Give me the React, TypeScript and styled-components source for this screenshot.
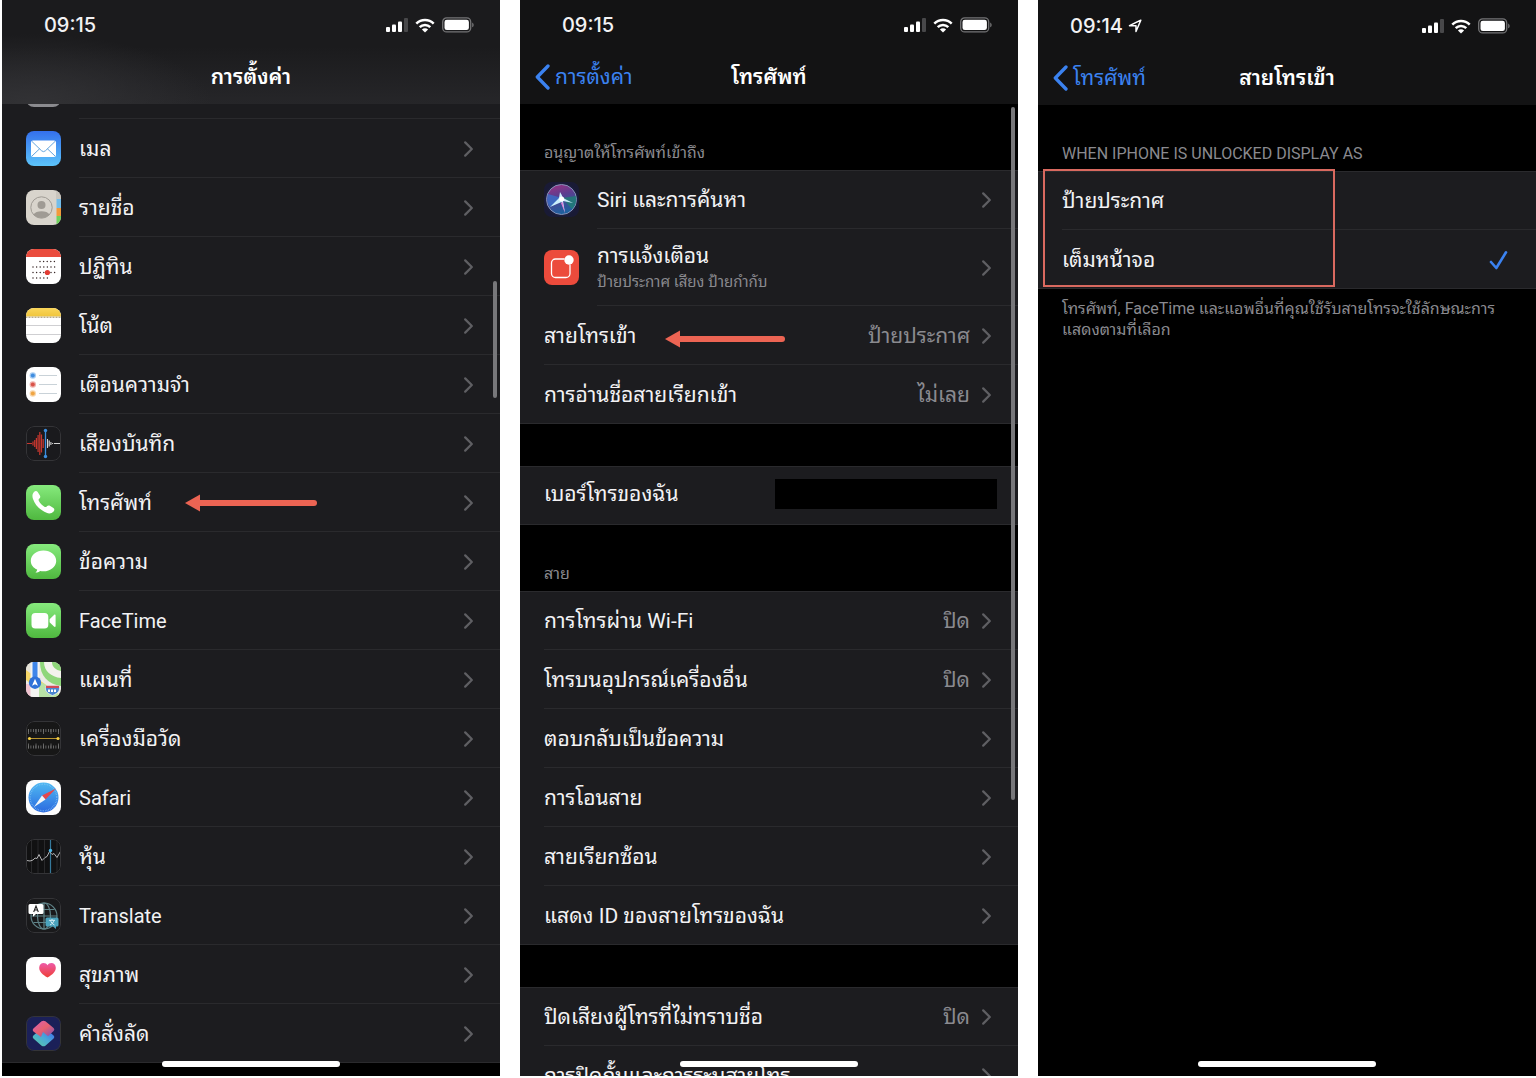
import React from "react";
import styled, { createGlobalStyle } from "styled-components";

const GlobalStyle = createGlobalStyle`
  * { box-sizing: border-box; }
  html, body { margin: 0; background: #fff; }
  body { font-family: Roboto, "Noto Sans Thai Looped", Loma, Garuda, Waree, "Noto Sans Thai", "Noto Sans", sans-serif; }
`;

const colors = {
  row: "#1c1c1f",
  line: "#2a2a2d",
  text: "#f2f2f4",
  muted: "#8a8a8f",
  chevron: "#5f5f63",
  blue: "#3b82f0",
  coral: "#ec6453",
};

/* ---------- layout ---------- */

const Board = styled.main`
  display: grid;
  grid-template-columns: repeat(3, minmax(0, 1fr));
  gap: 20px;
  height: 100vh;
  padding: 0 0 2px 2px;
  overflow: hidden;
`;

const Phone = styled.section`
  position: relative;
  display: flex;
  flex-direction: column;
  min-height: 0;
  overflow: hidden;
  background: #000;
  color: ${colors.text};
`;

const Header = styled.header<{ $lit?: boolean; $inset?: boolean }>`
  flex: none;
  padding-top: ${(p) => (p.$inset ? "1px" : "0")};
  background: ${(p) =>
    p.$lit
      ? "radial-gradient(ellipse 180px 70px at 30px 104px, #323235, transparent), linear-gradient(#1b1b1d 45%, #262629)"
      : "#131314"};
`;

const StatusBar = styled.div`
  display: flex;
  align-items: center;
  justify-content: space-between;
  height: 50px;
  padding-right: 26px;
`;

const Clock = styled.div`
  display: flex;
  align-items: center;
  justify-content: center;
  gap: 5px;
  width: 136px;
  font-family: Inter, sans-serif;
  font-size: 20px;
  font-weight: 500;
  line-height: 24px;
`;

const StatusIcons = styled.div`
  display: flex;
  align-items: center;
  gap: 7px;
`;

const NavBar = styled.nav`
  display: grid;
  grid-template-columns: 1fr auto 1fr;
  align-items: center;
  height: 54px;
  padding: 0 15px;
`;

const BackLink = styled.a`
  display: flex;
  align-items: center;
  gap: 5px;
  color: ${colors.blue};
  font-size: 21px;
  line-height: 32px;
  text-decoration: none;
`;

const Title = styled.h1`
  grid-column: 2;
  margin: 0;
  font-size: 21px;
  font-weight: 600;
  line-height: 32px;
  color: #fff;
`;

const Scroll = styled.div<{ $end?: boolean }>`
  flex: 1;
  min-height: 0;
  display: flex;
  flex-direction: column;
  justify-content: ${(p) => (p.$end ? "flex-end" : "flex-start")};
  padding-bottom: ${(p) => (p.$end ? "13px" : "0")};
  overflow: hidden;
`;

const Group = styled.div<{ $gap?: boolean }>`
  position: relative;
  flex: none;
  margin-top: ${(p) => (p.$gap ? "42px" : "0")};
  background: ${colors.row};
  box-shadow: inset 0 1px ${colors.line}, inset 0 -1px ${colors.line};
`;

const SectionTitle = styled.h2`
  display: flex;
  flex: none;
  align-items: flex-end;
  height: 66px;
  margin: 0;
  padding: 0 24px 7px;
  color: ${colors.muted};
  font-size: 16px;
  font-weight: 400;
  line-height: 20px;
`;

const RowLink = styled.a<{ $tall?: boolean }>`
  position: relative;
  display: flex;
  align-items: center;
  gap: 18px;
  height: ${(p) => (p.$tall ? "77px" : "59px")};
  padding-left: 24px;
  color: inherit;
  text-decoration: none;
`;

const RowBody = styled.span<{ $latin?: boolean }>`
  display: flex;
  flex: 1;
  align-items: center;
  gap: 12px;
  height: 100%;
  padding: 2px 27px 0 0;
  border-bottom: 1px solid ${colors.line};
  font-size: ${(p) => (p.$latin ? "20px" : "21px")};
  line-height: 28px;
`;

const Labels = styled.span`
  flex: 1;
  display: flex;
  flex-direction: column;
`;

const Sub = styled.span`
  color: ${colors.muted};
  font-size: 15px;
  line-height: 24px;
`;

const Value = styled.span`
  color: ${colors.muted};
`;

const NumberRow = styled.div`
  display: flex;
  align-items: center;
  justify-content: space-between;
  height: 59px;
  padding: 0 21px 4px 24px;
  font-size: 21px;
  line-height: 28px;
`;

const Redaction = styled.span`
  width: 222px;
  height: 30px;
  background: #000;
`;

const ChoiceGroup = styled(Group).attrs({ as: "fieldset" })`
  min-width: 0;
  margin: 0;
  padding: 0;
  border: 0;
`;

const Choice = styled.label`
  display: flex;
  align-items: center;
  height: 59px;
  padding-left: 24px;
`;

const Radio = styled.input`
  appearance: none;
  width: 20px;
  height: 20px;
  margin: 0 -13px 0 0;
  background: transparent;
  & + svg { visibility: hidden; }
  &:checked + svg { visibility: visible; }
`;

const Note = styled.p`
  margin: 0;
  padding: 9px 24px;
  color: ${colors.muted};
  font-size: 16px;
  line-height: 21px;
`;

/* ---------- overlays ---------- */

const HomeIndicator = styled.div`
  position: absolute;
  bottom: 9px;
  left: 50%;
  width: 178px;
  height: 6px;
  margin-left: -89px;
  border-radius: 3px;
  background: #fff;
`;

const ScrollThumb = styled.div<{ $top: number; $length: number }>`
  position: absolute;
  top: ${(p) => p.$top}px;
  right: 3px;
  width: 4px;
  height: ${(p) => p.$length}px;
  border-radius: 2px;
  background: #77777a;
`;

const ArrowMark = styled.svg<{ $left: number; $top: number }>`
  position: absolute;
  left: ${(p) => p.$left}px;
  top: ${(p) => p.$top}px;
`;

const Frame = styled.div`
  position: absolute;
  top: -2px;
  left: 5px;
  width: 292px;
  height: 118px;
  border: 2px solid #d9695f;
`;

/* ---------- glyphs ---------- */

const Chevron = () => (
  <svg width="9" height="16" viewBox="0 0 9 16" fill="none" stroke={colors.chevron} strokeWidth="2.2" strokeLinecap="round" strokeLinejoin="round" aria-hidden>
    <path d="M1.2 1.4 7.8 8l-6.600 6.600" />
  </svg>
);

const BackChevron = () => (
  <svg width="15" height="26" viewBox="0 0 15 26" fill="none" stroke={colors.blue} strokeWidth="3.300" strokeLinecap="round" strokeLinejoin="round" aria-hidden>
    <path d="M13 2 2.300 13 13 24" />
  </svg>
);

const Check = () => (
  <svg width="20" height="20" viewBox="0 0 20 20" fill="none" stroke={colors.blue} strokeWidth="2.600" strokeLinecap="round" strokeLinejoin="round" aria-hidden>
    <path d="M2 12 7.300 18 17 2.300" />
  </svg>
);

const Arrow = ({ left, top, length }: { left: number; top: number; length: number }) => (
  <ArrowMark $left={left} $top={top} width={length} height="18" viewBox={`0 0 ${length} 18`} aria-hidden>
    <path d="M0 9 15 .5v17z" fill={colors.coral} />
    <path d={`M14 9H${length - 3}`} stroke={colors.coral} strokeWidth="6" strokeLinecap="round" />
  </ArrowMark>
);

const Signal = () => (
  <svg width="22" height="16" viewBox="0 0 22 16" fill="#fff" aria-hidden>
    <rect x="0" y="10" width="4" height="5" rx="1" />
    <rect x="6" y="7.500" width="4" height="7.500" rx="1" />
    <rect x="12" y="4.500" width="4" height="10.500" rx="1" />
    <rect x="18" y="1" width="4" height="14" rx="1" fill="#48484a" />
  </svg>
);

const Wifi = () => (
  <svg width="20" height="15" viewBox="0 0 20 15" fill="none" stroke="#fff" strokeWidth="2.500" aria-hidden>
    <path d="M1.300 5.700a12.300 12.300 0 0 1 17.400 0M4.700 9.200a7.500 7.500 0 0 1 10.600 0" />
    <path d="M10 14.500 6.900 11.500a4.400 4.400 0 0 1 6.200 0z" fill="#fff" stroke="none" />
  </svg>
);

const Battery = () => (
  <svg width="32" height="16" viewBox="0 0 32 16" aria-hidden>
    <rect x=".700" y=".900" width="28" height="14" rx="4" fill="none" stroke="#747476" strokeWidth="1.300" />
    <rect x="2.500" y="2.700" width="24.400" height="10.400" rx="2.300" fill="#fff" />
    <path d="M30.200 5.500v4.800c1.900-.7 1.900-4.100 0-4.800z" fill="#747476" />
  </svg>
);

const LocationGlyph = () => (
  <svg width="14" height="14" viewBox="0 0 14 14" fill="none" stroke="#fff" strokeWidth="1.500" strokeLinejoin="round" aria-hidden>
    <path d="M12.800 1.200 8 12.500V6.700H1.500z" />
  </svg>
);

/* ---------- app icons ---------- */

const Tile = styled.svg.attrs({ viewBox: "0 0 35 35", "aria-hidden": true })`
  flex: none;
  width: 35px;
  height: 35px;
  border-radius: 8px;
`;

const DarkEdge = () => <rect x=".5" y=".5" width="34" height="34" rx="7.500" fill="none" stroke="#343437" />;

const Greens = ({ id }: { id: string }) => (
  <>
    <linearGradient id={id} x1="0" y1="0" x2="0" y2="1">
      <stop offset="0" stopColor="#86ea7d" />
      <stop offset="1" stopColor="#4fb83f" />
    </linearGradient>
    <rect width="35" height="35" fill={`url(#${id})`} />
  </>
);

const MailIcon = () => (
  <Tile>
    <linearGradient id="mail" x1="0" y1="0" x2="0" y2="1">
      <stop offset="0" stopColor="#3470ec" />
      <stop offset="1" stopColor="#5cc4fa" />
    </linearGradient>
    <rect width="35" height="35" fill="url(#mail)" />
    <rect x="5" y="9.500" width="25" height="16.500" rx="2" fill="#fff" />
    <path d="m5.800 10.300 9.800 9.500q1.900 1.700 3.800 0l9.800-9.500M5.800 25.200l7.900-7.500M29.200 25.200l-7.900-7.500" fill="none" stroke="#62a3dd" strokeWidth="1" />
  </Tile>
);

const ContactsIcon = () => (
  <Tile>
    <rect width="35" height="35" fill="#d8d4cc" />
    <path d="M30 0h5v9h-5z" fill="#c9c5bd" />
    <path d="M30.500 9H35v9h-4.500z" fill="#73bdea" />
    <path d="M30.500 18H35v8h-4.500z" fill="#f29a3c" />
    <path d="M30.500 26H35v9h-4.500z" fill="#6fd25c" />
    <circle cx="15.500" cy="17.500" r="10.700" fill="none" stroke="#9f9b94" strokeWidth="1" />
    <circle cx="15.500" cy="15" r="4" fill="#9f9b94" />
    <path d="M7.500 24.500c2-4.500 14-4.500 16 0a10.700 10.700 0 0 1-16 0z" fill="#9f9b94" />
  </Tile>
);

const CalendarIcon = () => (
  <Tile>
    <rect width="35" height="35" fill="#fff" />
    <rect width="35" height="8" fill="#ea4c3d" />
    <g stroke="#3a2a2a" strokeWidth="1.500" strokeLinecap="round" strokeDasharray="0 3.600">
      <path d="M14 12.600h16" />
      <path d="M7 18h23" />
      <path d="M7 23.500h23" />
      <path d="M7 29h16" />
    </g>
    <circle cx="21.400" cy="23.500" r="2.600" fill="#e23c33" />
  </Tile>
);

const NotesIcon = () => (
  <Tile>
    <linearGradient id="notes" x1="0" y1="0" x2="0" y2="1">
      <stop offset="0" stopColor="#fad65a" />
      <stop offset="1" stopColor="#f0c53c" />
    </linearGradient>
    <rect width="35" height="35" fill="#fff" />
    <rect width="35" height="8.500" fill="url(#notes)" />
    <path d="M0 9.300h35" stroke="#b9ad8c" strokeWidth="1.500" strokeDasharray="1 .5" />
    <path d="M0 17.500h35M0 26.500h35" stroke="#cfcfd2" strokeWidth="1" />
  </Tile>
);

const RemindersIcon = () => (
  <Tile>
    <rect width="35" height="35" fill="#fff" />
    <path d="M13 8.500h18M13 17.500h18M13 26.500h18" stroke="#c9d2d8" strokeWidth="1" />
    {[["#3f8de0", 8.5], ["#d9534a", 17.5], ["#efa544", 26.5]].map(([c, y]) => (
      <g key={y} fill={c as string}>
        <circle cx="6.800" cy={y} r="3.200" opacity=".45" />
        <circle cx="6.800" cy={y} r="2" />
      </g>
    ))}
  </Tile>
);

const VoiceIcon = () => (
  <Tile>
    <rect width="35" height="35" fill="#1a1a1d" />
    <path d="M1 17.500h5M7 15.500v4M8.700 14v7M10.400 12v11M12.100 9v17M13.800 6v23M15.500 8.500v18M17.200 13v9" stroke="#c8372f" strokeWidth="1.200" />
    <path d="M21.500 13v9M23.200 14.500v6M24.900 16v3M26.600 17v1M28 17.500h6" stroke="#d5d5d5" strokeWidth="1.100" />
    <path d="M19.500 4v27" stroke="#3c8fe0" strokeWidth="1.300" />
    <circle cx="19.500" cy="4.500" r="1.700" fill="#3c8fe0" />
    <circle cx="19.500" cy="30.500" r="1.700" fill="#3c8fe0" />
    <DarkEdge />
  </Tile>
);

const PhoneIcon = () => (
  <Tile>
    <Greens id="phone" />
    <path d="M8.200 6.700c1.200-1.200 2.700-.9 3.500.3l2.200 3.400c.7 1.200.4 2.200-.5 3-.9.800-1.100 1.400-.5 2.500 1.300 2.300 3.200 4.300 5.500 5.800 1.100.7 1.700.4 2.500-.5s1.900-1.100 3-.4l3.500 2.300c1.200.8 1.300 2.300.2 3.400-1.800 1.900-4.300 2.500-7 1.300C13.500 24.700 9.300 20.200 7 14c-1-2.800-.7-5.400 1.200-7.300z" fill="#fff" />
  </Tile>
);

const MessagesIcon = () => (
  <Tile>
    <Greens id="messages" />
    <path d="M17.500 6.500c7 0 12.700 4.700 12.700 10.400s-5.700 10.400-12.700 10.400c-1.200 0-2.300-.1-3.400-.4-1.200 1-2.700 1.600-4.600 1.700 1-.8 1.600-1.800 1.700-3-3.900-1.800-6.400-5-6.400-8.700C4.800 11.200 10.500 6.500 17.500 6.500z" fill="#fff" />
  </Tile>
);

const FaceTimeIcon = () => (
  <Tile>
    <Greens id="facetime" />
    <rect x="5.500" y="10" width="16.800" height="15.500" rx="3.800" fill="#fff" />
    <path d="M23.600 16.200 28 11.900c.7-.7 1.600-.5 1.600.5v10.700c0 1-.9 1.200-1.600.5l-4.400-4.300z" fill="#fff" />
  </Tile>
);

const MapsIcon = () => (
  <Tile>
    <rect width="35" height="35" fill="#ecebe4" />
    <path d="M0 0h5v16H0z" fill="#e6e3d8" />
    <path d="M0 8 35 34v1H22L0 18z" fill="#f6d768" />
    <path d="M14 0h21v24C22 22 14 14 14 0z" fill="#8fd67a" />
    <path d="M18 0h8c0 5 4 8 9 9v7C25 15 18 9 18 0z" fill="#f3f2ec" />
    <path d="M0 22h9v13H0z" fill="#f0c3d0" />
    <path d="M4.500 0h8.500v35H4.500z" fill="#f4f4f2" />
    <path d="M6.500 0h5v20h-5z" fill="#3f86ea" />
    <path d="M17 21 35 34v1H13V22z" fill="#b9e3a6" />
    <circle cx="9" cy="20.700" r="6.200" fill="#2f72d8" />
    <path d="m9 16.800 3 7-3-1.500-3 1.500z" fill="#fff" />
    <path d="M20 24h13c1.400 4 0 7-6.500 9.500C20 31 18.600 28 20 24z" fill="#4a86cf" stroke="#e8eef5" strokeWidth=".8" />
    <path d="M20 23.700h13v2.400H20z" fill="#d04a58" />
    <path d="M22 28.700h9" stroke="#fff" strokeWidth="2.400" strokeDasharray="2 1" />
  </Tile>
);

const MeasureIcon = () => (
  <Tile>
    <rect width="35" height="35" fill="#171717" />
    <g stroke="#777" strokeWidth=".8">
      <path d="M2 9.500h31" strokeWidth="3" strokeDasharray=".8 1.700" />
      <path d="M2 26h31" strokeWidth="3" strokeDasharray=".8 1.700" />
      <path d="M2.500 8v5M10 8v5M17.500 8v5M25 8v5M32.500 8v5M2.500 22.500v5M10 22.500v5M17.500 22.500v5M25 22.500v5M32.500 22.500v5" />
    </g>
    <path d="M3 17.500h29" stroke="#b8942e" strokeWidth="1" />
    <circle cx="3.500" cy="17.500" r="1.600" fill="#f5cf45" />
    <circle cx="32" cy="17.500" r="1.600" fill="#f5cf45" />
    <DarkEdge />
  </Tile>
);

const SafariIcon = () => (
  <Tile>
    <linearGradient id="safari" x1="0" y1="0" x2="0" y2="1">
      <stop offset="0" stopColor="#4fb9f2" />
      <stop offset="1" stopColor="#2b6ae0" />
    </linearGradient>
    <rect width="35" height="35" fill="#fdfdfd" />
    <circle cx="17.500" cy="17.500" r="15" fill="url(#safari)" />
    <circle cx="17.500" cy="17.500" r="13.300" fill="none" stroke="#8fcaf5" strokeWidth="1.400" strokeDasharray=".5 1.200" />
    <path d="M30 8.500 16 15.500l3.500 4z" fill="#e5484d" />
    <path d="M8 27l8-11.500 3.500 4z" fill="#f4f6f8" />
  </Tile>
);

const StocksIcon = () => (
  <Tile>
    <rect width="35" height="35" fill="#111112" />
    <path d="M5.500 0v35M12 0v35M18.500 0v35M31 0v35" stroke="#29292b" />
    <path d="M24.500 0v35" stroke="#35789a" strokeWidth="1.200" />
    <path d="m1 21.500 3 .5 3-1 2-2 2 .5 2-4 3 6 3-3 2-1 2.500-5 2.500 3 2-1 3 4 4-7" fill="none" stroke="#b0b0b2" strokeWidth="1" strokeLinejoin="round" />
    <circle cx="24.500" cy="11.500" r="1.700" fill="#4cb6e6" />
    <DarkEdge />
  </Tile>
);

const TranslateIcon = () => (
  <Tile>
    <rect width="35" height="35" fill="#19191b" />
    <g fill="none" stroke="#5f8388" strokeWidth="1.200">
      <circle cx="18" cy="18" r="13" />
      <ellipse cx="18" cy="18" rx="6.500" ry="13" />
      <path d="M18 5v26M5 18h26M7.500 11.500h21M7.500 24.500h21" />
    </g>
    <path d="M4 6h12a1.500 1.500 0 0 1 1.500 1.500v7A1.500 1.500 0 0 1 16 16h-6l-3 2.800V16H4a1.500 1.500 0 0 1-1.500-1.500v-7A1.500 1.500 0 0 1 4 6z" fill="#fff" />
    <path d="m7.700 14 2.300-6 2.300 6M8.500 12h3" fill="none" stroke="#222" strokeWidth="1.100" />
    <path d="M21 19.500h10a1.500 1.500 0 0 1 1.500 1.500v6a1.500 1.500 0 0 1-1.500 1.500h-1V31l-3-2.500h-6a1.500 1.500 0 0 1-1.500-1.500v-6a1.500 1.500 0 0 1 1.500-1.500z" fill="#4ba3bd" />
    <path d="M23 22.300h6M26 21v1.300M24 27c2-1 3.500-2.500 4-4.700M28.500 27c-2-1-3.500-2.500-4-4.700" fill="none" stroke="#e6f4f8" strokeWidth=".9" />
    <DarkEdge />
  </Tile>
);

const HealthIcon = () => (
  <Tile>
    <linearGradient id="health" x1="0" y1="0" x2="0" y2="1">
      <stop offset="0" stopColor="#ee5aa8" />
      <stop offset="1" stopColor="#ee3f36" />
    </linearGradient>
    <rect width="35" height="35" fill="#fff" />
    <path d="M21.500 20.500c-5-3-8.300-6-8.300-9.800 0-2.700 2-4.700 4.400-4.700 1.700 0 3.100.9 3.900 2.300.8-1.400 2.200-2.300 3.900-2.300 2.400 0 4.400 2 4.400 4.700 0 3.800-3.300 6.800-8.300 9.800z" fill="url(#health)" />
  </Tile>
);

const ShortcutsIcon = () => (
  <Tile>
    <linearGradient id="scTop" x1="0" y1="0" x2="1" y2="1">
      <stop offset="0" stopColor="#d760b8" />
      <stop offset=".5" stopColor="#e8616f" />
      <stop offset="1" stopColor="#7a4fb8" />
    </linearGradient>
    <linearGradient id="scBottom" x1="0" y1="1" x2="1" y2="0">
      <stop offset="0" stopColor="#5ccf9f" />
      <stop offset=".5" stopColor="#4aa8d8" />
      <stop offset="1" stopColor="#3a5ff0" />
    </linearGradient>
    <rect width="35" height="35" fill="#1b2058" />
    <path d="m19.300 12.600 8.300 6.900q1.500 1.500 0 3l-8.200 7.200q-1.900 1.300-3.800 0l-8.200-7.200q-1.500-1.500 0-3l8.100-6.900q1.900-1.200 3.800 0z" fill="url(#scBottom)" />
    <path d="m19.400 5.300 8.200 6.700q1.500 1.500 0 3L22 20.200 17 16l-2 5-7.600-5.500q-1.500-1.500 0-3l8.200-7.200q1.900-1.300 3.800 0z" fill="url(#scTop)" />
    <DarkEdge />
  </Tile>
);

const SiriIcon = () => (
  <Tile>
    <radialGradient id="siriBg">
      <stop offset="0" stopColor="#2a3a80" />
      <stop offset="1" stopColor="#191a35" />
    </radialGradient>
    <linearGradient id="siriOrb" x1="0" y1="0" x2=".3" y2="1">
      <stop offset="0" stopColor="#a5307f" />
      <stop offset=".45" stopColor="#5b3d8f" />
      <stop offset="1" stopColor="#1f5f9e" />
    </linearGradient>
    <rect width="35" height="35" fill="url(#siriBg)" />
    <circle cx="17.500" cy="17.500" r="15" fill="url(#siriOrb)" stroke="#8592b8" strokeWidth="1" />
    <path d="M18 16 32 14c1 6-1 10-4 13z" fill="#1f7f74" opacity=".8" />
    <path d="M18 16 4 12c-2 6 0 10 2 13z" fill="#3476d2" opacity=".7" />
    <path d="M16 10q2 3 3 6l10 5-10-2 2 12-3.500-11L6 25l9-9z" fill="#c9eefb" />
    <path d="m18.500 20 2.500 11-4-10z" fill="#e07ad8" />
    <circle cx="17.700" cy="17" r="2.500" fill="#fff" />
  </Tile>
);

const NotificationsIcon = () => (
  <Tile>
    <rect width="35" height="35" fill="#ec4b3c" />
    <path d="M20 9h-8.500A4 4 0 0 0 7.500 13v10.500a4 4 0 0 0 4 4H22a4 4 0 0 0 4-4V15" fill="none" stroke="#fff" strokeWidth="1.300" strokeLinecap="round" />
    <circle cx="25" cy="10" r="4.700" fill="#fff" />
  </Tile>
);

const GeneralTile = () => (
  <Tile>
    <rect width="35" height="35" fill="#8b8b8f" />
  </Tile>
);

/* ---------- parts ---------- */

function Top({ time, located, back, title, lit }: { time: string; located?: boolean; back?: string; title: string; lit?: boolean }) {
  return (
    <Header $lit={lit} $inset={located}>
      <StatusBar>
        <Clock>
          {time}
          {located && <LocationGlyph />}
        </Clock>
        <StatusIcons>
          <Signal />
          <Wifi />
          <Battery />
        </StatusIcons>
      </StatusBar>
      <NavBar>
        {back && (
          <BackLink href="#back">
            <BackChevron />
            {back}
          </BackLink>
        )}
        <Title>{title}</Title>
      </NavBar>
    </Header>
  );
}

interface RowProps {
  label: string;
  latin?: boolean;
  sub?: string;
  value?: string;
  icon?: React.ReactNode;
  mark?: React.ReactNode;
}

function Row({ label, latin, sub, value, icon, mark }: RowProps) {
  return (
    <RowLink href="#open" $tall={Boolean(sub)}>
      {icon}
      <RowBody $latin={latin}>
        <Labels>
          <span>{label}</span>
          {sub && <Sub>{sub}</Sub>}
        </Labels>
        {value && <Value>{value}</Value>}
        <Chevron />
      </RowBody>
      {mark}
    </RowLink>
  );
}

const apps: RowProps[] = [
  { label: "เมล", icon: <MailIcon /> },
  { label: "รายชื่อ", icon: <ContactsIcon /> },
  { label: "ปฏิทิน", icon: <CalendarIcon /> },
  { label: "โน้ต", icon: <NotesIcon /> },
  { label: "เตือนความจำ", icon: <RemindersIcon /> },
  { label: "เสียงบันทึก", icon: <VoiceIcon /> },
  { label: "โทรศัพท์", icon: <PhoneIcon />, mark: <Arrow left={183} top={21} length={132} /> },
  { label: "ข้อความ", icon: <MessagesIcon /> },
  { label: "FaceTime", latin: true, icon: <FaceTimeIcon /> },
  { label: "แผนที่", icon: <MapsIcon /> },
  { label: "เครื่องมือวัด", icon: <MeasureIcon /> },
  { label: "Safari", latin: true, icon: <SafariIcon /> },
  { label: "หุ้น", icon: <StocksIcon /> },
  { label: "Translate", latin: true, icon: <TranslateIcon /> },
  { label: "สุขภาพ", icon: <HealthIcon /> },
  { label: "คำสั่งลัด", icon: <ShortcutsIcon /> },
];

const calls: RowProps[] = [
  { label: "การโทรผ่าน Wi-Fi", value: "ปิด" },
  { label: "โทรบนอุปกรณ์เครื่องอื่น", value: "ปิด" },
  { label: "ตอบกลับเป็นข้อความ" },
  { label: "การโอนสาย" },
  { label: "สายเรียกซ้อน" },
  { label: "แสดง ID ของสายโทรของฉัน" },
];

const PartialRow = styled.div`
  display: flex;
  align-items: center;
  gap: 18px;
  height: 59px;
  padding-left: 24px;
`;

export default function App() {
  return (
    <>
      <GlobalStyle />
      <Board>
        <Phone>
          <Top time="09:15" title="การตั้งค่า" lit />
          <Scroll $end>
            <Group>
              <PartialRow>
                <GeneralTile />
                <RowBody />
              </PartialRow>
              {apps.map((app) => (
                <Row key={app.label} {...app} />
              ))}
            </Group>
          </Scroll>
          <ScrollThumb $top={281} $length={117} />
          <HomeIndicator />
        </Phone>

        <Phone>
          <Top time="09:15" back="การตั้งค่า" title="โทรศัพท์" />
          <Scroll>
            <SectionTitle>อนุญาตให้โทรศัพท์เข้าถึง</SectionTitle>
            <Group>
              <Row label="Siri และการค้นหา" icon={<SiriIcon />} />
              <Row label="การแจ้งเตือน" sub="ป้ายประกาศ เสียง ป้ายกำกับ" icon={<NotificationsIcon />} />
              <Row label="สายโทรเข้า" value="ป้ายประกาศ" mark={<Arrow left={145} top={24} length={120} />} />
              <Row label="การอ่านชื่อสายเรียกเข้า" value="ไม่เลย" />
            </Group>
            <Group $gap>
              <NumberRow>
                <span>เบอร์โทรของฉัน</span>
                <Redaction />
              </NumberRow>
            </Group>
            <SectionTitle>สาย</SectionTitle>
            <Group>
              {calls.map((call) => (
                <Row key={call.label} {...call} />
              ))}
            </Group>
            <Group $gap>
              <Row label="ปิดเสียงผู้โทรที่ไม่ทราบชื่อ" value="ปิด" />
              <Row label="การปิดกั้นและการระบุสายโทร" />
            </Group>
          </Scroll>
          <ScrollThumb $top={107} $length={693} />
          <HomeIndicator />
        </Phone>

        <Phone>
          <Top time="09:14" located back="โทรศัพท์" title="สายโทรเข้า" />
          <Scroll>
            <SectionTitle id="display-as">WHEN IPHONE IS UNLOCKED DISPLAY AS</SectionTitle>
            <ChoiceGroup aria-labelledby="display-as">
              <Choice>
                <RowBody>
                  <Labels>ป้ายประกาศ</Labels>
                  <Radio type="radio" name="display" value="banner" />
                  <Check />
                </RowBody>
              </Choice>
              <Choice>
                <RowBody>
                  <Labels>เต็มหน้าจอ</Labels>
                  <Radio type="radio" name="display" value="full" defaultChecked />
                  <Check />
                </RowBody>
              </Choice>
              <Frame />
            </ChoiceGroup>
            <Note>โทรศัพท์, FaceTime และแอพอื่นที่คุณใช้รับสายโทรจะใช้ลักษณะการแสดงตามที่เลือก</Note>
          </Scroll>
          <HomeIndicator />
        </Phone>
      </Board>
    </>
  );
}
